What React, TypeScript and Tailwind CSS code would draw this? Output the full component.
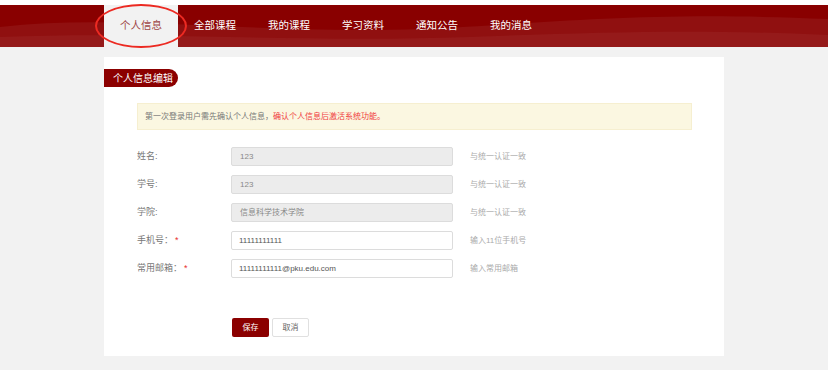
import React from "react";

const font = { fontFamily: '"Liberation Sans", "Noto Sans CJK SC", sans-serif' };

const tabs = ["个人信息", "全部课程", "我的课程", "学习资料", "通知公告", "我的消息"];

const rows: { label: string; value: string; hint: string; disabled: boolean; req?: boolean }[] = [
  { label: "姓名:", value: "123", hint: "与统一认证一致", disabled: true },
  { label: "学号:", value: "123", hint: "与统一认证一致", disabled: true },
  { label: "学院:", value: "信息科学技术学院", hint: "与统一认证一致", disabled: true },
  { label: "手机号：", value: "11111111111", hint: "输入11位手机号", disabled: false, req: true },
  { label: "常用邮箱：", value: "11111111111@pku.edu.com", hint: "输入常用邮箱", disabled: false, req: true },
];

export default function App() {
  return (
    <div className="relative w-[828px] h-[370px] overflow-hidden bg-[#f2f2f2]" style={font}>
      <div className="h-[5px] bg-white" />
      <div className="relative h-[42px] bg-[#890000] overflow-hidden">
        <svg className="absolute inset-0" width="828" height="42" viewBox="0 0 828 42" preserveAspectRatio="none">
          <path d="M0 22 C 120 8, 260 30, 420 24 C 560 18, 640 6, 828 14 L828 42 L0 42 Z" fill="#901010" />
          <path d="M0 32 C 150 26, 300 38, 470 32 C 600 27, 700 24, 828 30 L828 42 L0 42 Z" fill="#951a1a" />
        </svg>
        <div className="relative flex h-full pl-[104px]">
          {tabs.map((t, i) => (
            <div
              key={t}
              className={
                i === 0
                  ? "w-[74px] h-full flex items-center justify-center bg-[#f2f2f2] text-[#a04848] text-[10.5px]"
                  : "w-[74px] h-full flex items-center justify-center text-white text-[10.5px]"
              }
            >
              {t}
            </div>
          ))}
        </div>
      </div>
      <div className="absolute left-[95px] top-[4px] w-[92px] h-[44px] rounded-[50%] border-2 border-[#ec2a22]" />

      <div className="mt-[10px] ml-[104px] w-[620px] h-[299px] bg-white pt-[12px]">
        <div className="w-[74px] h-[18px] rounded-r-full bg-[#8b0000] text-white text-[10px] flex items-center pl-[9px]">
          个人信息编辑
        </div>
        <div className="mt-[16px] ml-[33px] w-[555px] h-[27px] bg-[#fbf7e1] border border-[#f6efd0] flex items-center pl-[7px] text-[8px] text-[#777]">
          第一次登录用户需先确认个人信息，<span className="text-[#f03c3c]">确认个人信息后激活系统功能。</span>
        </div>
        <div className="mt-[17px] ml-[33px] flex flex-col gap-[9px]">
          {rows.map((r) => (
            <div key={r.label} className="flex items-center h-[19px]">
              <div className="w-[94px] text-[9px] text-[#777]">
                {r.label}
                {r.req && <span className="text-[#e83030] ml-[2px]">*</span>}
              </div>
              <div
                className={
                  r.disabled
                    ? "w-[222px] h-[19px] rounded-[2px] border border-[#dcdcdc] bg-[#ececec] flex items-center pl-[8px] text-[8px] text-[#888]"
                    : "w-[222px] h-[19px] rounded-[2px] border border-[#dcdcdc] bg-white flex items-center pl-[7px] text-[8px] text-[#555]"
                }
              >
                {r.value}
              </div>
              <div className="ml-[17px] text-[8px] text-[#aaa]">{r.hint}</div>
            </div>
          ))}
        </div>
        <div className="mt-[40px] ml-[128px] flex gap-[3px]">
          <div className="w-[37px] h-[19px] rounded-[2px] bg-[#8b0000] text-white text-[8px] flex items-center justify-center">
            保存
          </div>
          <div className="w-[37px] h-[19px] rounded-[2px] border border-[#e0e0e0] bg-white text-[#666] text-[8px] flex items-center justify-center">
            取消
          </div>
        </div>
      </div>
    </div>
  );
}
